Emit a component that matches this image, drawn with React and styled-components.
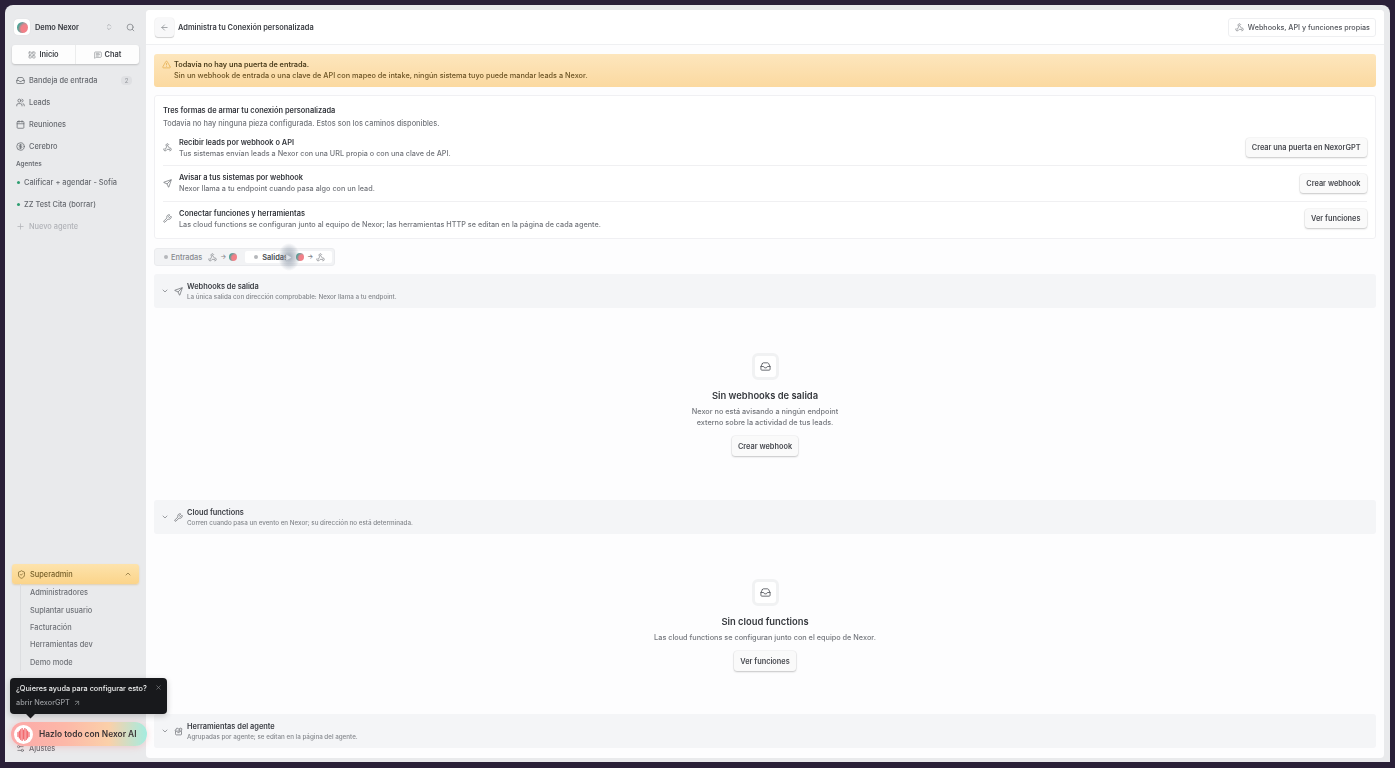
import React from 'react';
import styled, { createGlobalStyle } from 'styled-components';
import {
  ArrowLeft, ArrowUpRight, Calendar, ChevronDown, ChevronUp, ChevronsUpDown, CircleDollarSign,
  Inbox, LayoutGrid, MessageSquareText, Plus, Search, Send, Settings2, ShieldCheck, ToolCase,
  TriangleAlert, Users, Webhook, Wrench, X,
} from 'lucide-react';

const Global = createGlobalStyle`
  html, body { margin: 0; padding: 0; height: 100%; overflow: hidden; background: #2a2038; }
  #root { height: 100%; }
  * { box-sizing: border-box; }
  body { font-family: Inter, "Noto Sans", sans-serif; }
`;

const Frame = styled.div`
  position: relative; width: 1395px; height: 768px; padding: 5px 5px 6px 5px; background: #2a2038; overflow: hidden;
`;
const Screen = styled.div`
  position: relative; height: 100%; display: flex; background: #e9eaec; border-radius: 8px 8px 0 0;
  padding: 5px 6px 4px 0; overflow: hidden; filter: blur(0.42px);
`;
const Sidebar = styled.aside`
  width: 141px; flex: none; display: flex; flex-direction: column; padding: 5px 7px 0 7px;
`;
const Brand = styled.div`
  height: 24px; display: flex; align-items: center; color: #33363c;
  font-size: 7.4px; font-weight: 600; padding: 0 4px 0 2px; gap: 5px; margin-bottom: 6px;
`;
const BrandBox = styled.div`
  width: 16px; height: 16px; border-radius: 4px; background: #fff; display: flex; align-items: center; justify-content: center; box-shadow: 0 0 1px #0002;
`;
const LogoDot = styled.span`
  display: block; width: ${p => p.$s || 11}px; height: ${p => p.$s || 11}px; border-radius: 50%; flex: none; margin-left: ${p => p.$ml || 0}px;
  background: radial-gradient(circle at 70% 62%, #f28088 0 34%, transparent 66%), linear-gradient(100deg, #3fa692, #6d9c9c 42%, #ec9aa0);
`;
const BrandName = styled.span`flex: 1;`;
const TabBar = styled.div`
  height: 19px; display: flex; border-radius: 3px; background: #fdfdfd; box-shadow: 0 1px 2px #0000002e; margin-bottom: 5px;
`;
const TopTab = styled.div`
  flex: 1; display: flex; align-items: center; justify-content: center; gap: 3px; font-size: 7.4px; font-weight: 600; color: #3c3f45;
  & + & { border-left: 1px solid #eceded; }
`;
const NavItem = styled.div`
  height: 22px; display: flex; align-items: center; gap: 4px; padding-left: 4px; font-size: 7.4px; font-weight: 500; color: ${p => p.$muted ? '#b1b3b8' : '#66696f'};
`;
const Count = styled.span`
  margin-left: auto; margin-right: 7px; width: 11px; height: 9px; border-radius: 4px; background: #dfe0e3; color: #989ba0; font-size: 6px; display: flex; align-items: center; justify-content: center;
`;
const SideLabel = styled.div`
  height: 14px; display: flex; align-items: center; padding-left: 4px; font-size: 6.4px; font-weight: 600; color: #6b6e74;
`;
const AgentDot = styled.span`
  width: 3px; height: 3px; border-radius: 50%; background: #2e9e72; margin: 0 0 0 1px;
`;
const Grow = styled.div`flex: 1;`;
const SuperBtn = styled.div`
  height: 20px; border-radius: 3px; display: flex; align-items: center; gap: 4px; padding: 0 7px 0 5px; font-size: 7.4px; font-weight: 500; color: #77602a;
  background: linear-gradient(#fde3ac, #fbd48a); box-shadow: 0 1px 2px #c9973e55;
  svg:last-child { margin-left: auto; }
`;
const SubList = styled.div`
  margin-left: 8px; border-left: 1px solid #dcdde0; padding-left: 9px; display: flex; flex-direction: column; height: 87px; margin-bottom: 66px;
`;
const SubItem = styled.div`
  height: 17.4px; display: flex; align-items: center; font-size: 7.4px; font-weight: 500; color: #6e7177;
`;
const AjustesItem = styled(NavItem)`margin-bottom: -1px;`;
const Tip = styled.div`
  position: absolute; left: 5px; top: 673px; width: 157px; height: 36px; background: #18191c; border-radius: 4px; padding: 5px 6px; color: #eceded; font-size: 7.3px; font-weight: 500; z-index: 5; box-shadow: 0 2px 6px #0003;
  &::after { content: ''; position: absolute; left: 17px; bottom: -3px; width: 7px; height: 7px; background: #18191c; transform: rotate(45deg); }
`;
const TipLine = styled.div`line-height: 11px; white-space: nowrap;`;
const TipLink = styled.div`
  margin-top: 3px; line-height: 11px; color: #96989c; display: flex; align-items: center; gap: 3px; font-size: 7.3px;
`;
const TipClose = styled.span`
  position: absolute; right: 5px; top: 6px; color: #8f9195; display: flex;
`;
const AiPill = styled.div`
  position: absolute; left: 6px; top: 717px; width: 136px; height: 24px; border-radius: 12px; z-index: 6; display: flex; align-items: center; gap: 6px; padding-left: 3px;
  background: linear-gradient(90deg, #fca9a9 0%, #fdb8a8 40%, #fbd0a9 72%, #a5ece0 100%); box-shadow: 0 1px 7px #f5838355; font-size: 8.4px; font-weight: 600; color: #3a3436;
`;
const Orb = styled.span`
  width: 19px; height: 19px; border-radius: 50%; background: #fff; display: flex; align-items: center; justify-content: center; flex: none;
`;
const Main = styled.main`
  flex: 1; background: #fdfdfe; border-radius: 4px; overflow: hidden; display: flex; flex-direction: column; min-width: 0;
`;
const Header = styled.header`
  height: 35px; flex: none; display: flex; align-items: center; background: #fff; border-bottom: 1px solid #eff0f2; padding: 0 8px 0 9px; gap: 4px;
`;
const BackBtn = styled.div`
  width: 19px; height: 19px; border-radius: 3px; background: #f8f8f9; box-shadow: 0 1px 1px #0000002a, 0 0 0 0.5px #0000000f; display: flex; align-items: center; justify-content: center; color: #8a8d92;
`;
const HeaderTitle = styled.div`flex: 1; font-size: 7.4px; font-weight: 600; color: #3a3d43; padding-top: 1px;`;
const GhostBtn = styled.div`
  height: 19px; padding: 0 5px 0 6px; display: flex; align-items: center; gap: 4px; border: 1px solid #eeeff1; border-radius: 3px; font-size: 7.22px; font-weight: 500; color: #54575d; background: #fff;
`;
const Body = styled.div`
  flex: 1; min-height: 0; padding: 9px 8px 0 8px; display: flex; flex-direction: column;
`;
const Alert = styled.div`
  height: 33px; flex: none; border-radius: 3px; background: linear-gradient(#fde6bd, #fbd9a0); display: flex; gap: 3px; padding: 5px 8px; color: #6d5526; font-size: 7.31px; font-weight: 500; line-height: 11px;
  svg { margin-top: 1px; color: #e5ae4c; flex: none; }
`;
const Strong = styled.div`font-weight: 600; color: #4a3c1c;`;
const Card = styled.section`
  height: 144px; flex: none; margin-top: 8px; border: 1px solid #f0f0f3; border-radius: 3px; background: #fff; padding: 9px 8.5px 0 8px;
`;
const CardTitle = styled.div`font-size: 7.4px; line-height: 12px; font-weight: 600; color: #33363c;`;
const CardSub = styled.div`font-size: 7.4px; font-weight: 500; line-height: 13px; color: #73767c;`;
const Row = styled.div`
  height: 35.25px; display: flex; align-items: center; gap: 7px;
  & + & { border-top: 1px solid #f0f0f2; }
  svg { color: #72757b; flex: none; }
`;
const RowText = styled.div`flex: 1; min-width: 0;`;
const RowTitle = styled.div`font-size: 7.4px; line-height: 11px; font-weight: 600; color: #33363c;`;
const RowDesc = styled.div`font-size: 7.25px; font-weight: 500; line-height: 11px; color: #73767c;`;
const Btn = styled.div`
  height: 19px; padding: 0 6px; flex: none; display: inline-flex; align-items: center; border-radius: 3px; background: #fafafa; font-size: 7.35px; font-weight: 600; color: #47494f;
  box-shadow: 0 1px 2px #00000033, 0 0 0 0.5px #00000010;
`;
const Segment = styled.div`
  width: 181px; height: 18px; flex: none; margin-top: 9px; padding: 2px; display: flex; border-radius: 3px; background: #f2f3f5; border: 1px solid #eaebee; gap: 3px; position: relative;
`;
const SegItem = styled.div`
  display: flex; align-items: center; gap: 3px; font-size: 7.4px; padding: 0 5px 0 ${p => p.$on ? 9 : 7}px; color: ${p => p.$on ? '#4a4d52' : '#85888d'}; background: ${p => p.$on ? '#fff' : 'transparent'};
  font-weight: ${p => p.$on ? 600 : 500}; border-radius: 2px; flex: ${p => p.$on ? 1 : 'none'};
  svg { color: #85888d; flex: none; }
`;
const SegDot = styled.span`width: 4px; height: 4px; border-radius: 50%; background: #b5b7bb; flex: none; margin-right: ${p => p.$mr || 0}px;`;
const SegIcon = styled.span`display: flex; margin-left: 3px;`;
const Arrow = styled.span`font-size: 6.4px; color: #85888d;`;
const Cursor = styled.div`
  position: absolute; left: 123px; top: -6px; width: 22px; height: 28px; border-radius: 50%; z-index: 2; display: flex; align-items: center; justify-content: center;
  background: radial-gradient(closest-side, #7d8a9cbb, #7d8a9c55 60%, transparent);
`;
const SectionHead = styled.div`
  height: 34px; flex: none; margin-top: ${p => p.$mt || 0}px; border-radius: 3px; background: #f4f5f7; display: flex; align-items: center; padding-left: 7px; gap: 4.5px;
  svg { color: #6d7076; flex: none; }
`;
const SecText = styled.div`padding-top: 1px;`;
const SecTitle = styled.div`font-size: 7.4px; line-height: 11px; font-weight: 600; color: #3a3d43;`;
const SecDesc = styled.div`font-size: 6.28px; font-weight: 500; line-height: 11px; color: #85888d;`;
const Empty = styled.div`
  height: ${p => p.$h}px; flex: none; display: flex; flex-direction: column; align-items: center; justify-content: flex-start; padding-top: 45px;
`;
const EmptyIcon = styled.div`
  width: 27px; height: 27px; border-radius: 6px; background: #fff; border: 3px solid #f1f2f3; display: flex; align-items: center; justify-content: center; color: #5e6167;
`;
const EmptyTitle = styled.div`margin-top: 9px; font-size: 9.4px; line-height: 13px; font-weight: 600; color: #36393e;`;
const EmptyText = styled.div`margin-top: 4px; font-size: 7.3px; font-weight: 500; line-height: 11px; text-align: center; color: #75787e; margin-bottom: 4px;`;
const EmptyBtn = styled(Btn)`height: 20px; margin-top: 4px;`;

function Wave() {
  const h = [4, 7, 10, 12, 9, 12, 10, 7, 4];
  return (
    <svg width="13" height="13" viewBox="0 0 13 13">
      {h.map((v, i) => <line key={i} x1={1 + i * 1.375} x2={1 + i * 1.375} y1={6.5 - v / 2} y2={6.5 + v / 2} stroke="#f2696f" strokeWidth="1.2" strokeLinecap="round" />)}
    </svg>
  );
}

function Section({ icon: I, title, desc, mt }) {
  return (
    <SectionHead $mt={mt}>
      <ChevronDown size={8} />
      <I size={9} />
      <SecText>
        <SecTitle>{title}</SecTitle>
        <SecDesc>{desc}</SecDesc>
      </SecText>
    </SectionHead>
  );
}

export default function App() {
  return (
    <Frame>
      <Global />
      <Screen>
        <Sidebar>
          <Brand>
            <BrandBox><LogoDot /></BrandBox>
            <BrandName>Demo Nexor</BrandName>
            <ChevronsUpDown size={8} color="#9a9da2" style={{ marginRight: 8 }} />
            <Search size={9} color="#7d8086" />
          </Brand>
          <TabBar>
            <TopTab><LayoutGrid size={8} color="#8b8e93" />Inicio</TopTab>
            <TopTab><MessageSquareText size={8} color="#8b8e93" />Chat</TopTab>
          </TabBar>
          <NavItem><Inbox size={9} />Bandeja de entrada<Count>2</Count></NavItem>
          <NavItem><Users size={9} />Leads</NavItem>
          <NavItem><Calendar size={9} />Reuniones</NavItem>
          <NavItem><CircleDollarSign size={9} />Cerebro</NavItem>
          <SideLabel>Agentes</SideLabel>
          <NavItem><AgentDot />Calificar + agendar - Sofía</NavItem>
          <NavItem><AgentDot />ZZ Test Cita (borrar)</NavItem>
          <NavItem $muted><Plus size={9} />Nuevo agente</NavItem>
          <Grow />
          <SuperBtn><ShieldCheck size={9} />Superadmin<ChevronUp size={8} /></SuperBtn>
          <SubList>
            <SubItem>Administradores</SubItem>
            <SubItem>Suplantar usuario</SubItem>
            <SubItem>Facturación</SubItem>
            <SubItem>Herramientas dev</SubItem>
            <SubItem>Demo mode</SubItem>
          </SubList>
          <AjustesItem><Settings2 size={9} />Ajustes</AjustesItem>
        </Sidebar>
        <Main>
          <Header>
            <BackBtn><ArrowLeft size={9} /></BackBtn>
            <HeaderTitle>Administra tu Conexión personalizada</HeaderTitle>
            <GhostBtn><Webhook size={9} color="#85888d" />Webhooks, API y funciones propias</GhostBtn>
          </Header>
          <Body>
            <Alert>
              <TriangleAlert size={9} />
              <div>
                <Strong>Todavía no hay una puerta de entrada.</Strong>
                <div>Sin un webhook de entrada o una clave de API con mapeo de intake, ningún sistema tuyo puede mandar leads a Nexor.</div>
              </div>
            </Alert>
            <Card>
              <CardTitle>Tres formas de armar tu conexión personalizada</CardTitle>
              <CardSub>Todavía no hay ninguna pieza configurada. Estos son los caminos disponibles.</CardSub>
              <Row>
                <Webhook size={9} />
                <RowText><RowTitle>Recibir leads por webhook o API</RowTitle><RowDesc>Tus sistemas envían leads a Nexor con una URL propia o con una clave de API.</RowDesc></RowText>
                <Btn>Crear una puerta en NexorGPT</Btn>
              </Row>
              <Row>
                <Send size={9} />
                <RowText><RowTitle>Avisar a tus sistemas por webhook</RowTitle><RowDesc>Nexor llama a tu endpoint cuando pasa algo con un lead.</RowDesc></RowText>
                <Btn>Crear webhook</Btn>
              </Row>
              <Row>
                <Wrench size={9} />
                <RowText><RowTitle>Conectar funciones y herramientas</RowTitle><RowDesc>Las cloud functions se configuran junto al equipo de Nexor; las herramientas HTTP se editan en la página de cada agente.</RowDesc></RowText>
                <Btn>Ver funciones</Btn>
              </Row>
            </Card>
            <Segment>
              <SegItem><SegDot />Entradas<SegIcon><Webhook size={9} /></SegIcon><Arrow>→</Arrow><LogoDot $s={8} /></SegItem>
              <SegItem $on><SegDot $mr={1} />Salidas<LogoDot $s={8} $ml={5} /><Arrow>→</Arrow><Webhook size={9} /></SegItem>
              <Cursor>
                <svg width="8" height="9" viewBox="0 0 8 9"><path d="M1 1 L7 4.5 L1 8 Z" fill="#dfe3ea" stroke="#aab1bd" strokeWidth="0.6" /></svg>
              </Cursor>
            </Segment>
            <Section icon={Send} mt={8} title="Webhooks de salida" desc="La única salida con dirección comprobable: Nexor llama a tu endpoint." />
            <Empty $h={192}>
              <EmptyIcon><Inbox size={11} /></EmptyIcon>
              <EmptyTitle>Sin webhooks de salida</EmptyTitle>
              <EmptyText>Nexor no está avisando a ningún endpoint<br />externo sobre la actividad de tus leads.</EmptyText>
              <EmptyBtn>Crear webhook</EmptyBtn>
            </Empty>
            <Section icon={Wrench} title="Cloud functions" desc="Corren cuando pasa un evento en Nexor; su dirección no está determinada." />
            <Empty $h={180}>
              <EmptyIcon><Inbox size={11} /></EmptyIcon>
              <EmptyTitle>Sin cloud functions</EmptyTitle>
              <EmptyText>Las cloud functions se configuran junto con el equipo de Nexor.</EmptyText>
              <EmptyBtn>Ver funciones</EmptyBtn>
            </Empty>
            <Section icon={ToolCase} title="Herramientas del agente" desc="Agrupadas por agente; se editan en la página del agente." />
          </Body>
        </Main>
        <Tip>
          <TipLine>¿Quieres ayuda para configurar esto?</TipLine>
          <TipLink>abrir NexorGPT <ArrowUpRight size={8} /></TipLink>
          <TipClose><X size={7} /></TipClose>
        </Tip>
        <AiPill><Orb><Wave /></Orb>Hazlo todo con Nexor AI</AiPill>
      </Screen>
    </Frame>
  );
}
